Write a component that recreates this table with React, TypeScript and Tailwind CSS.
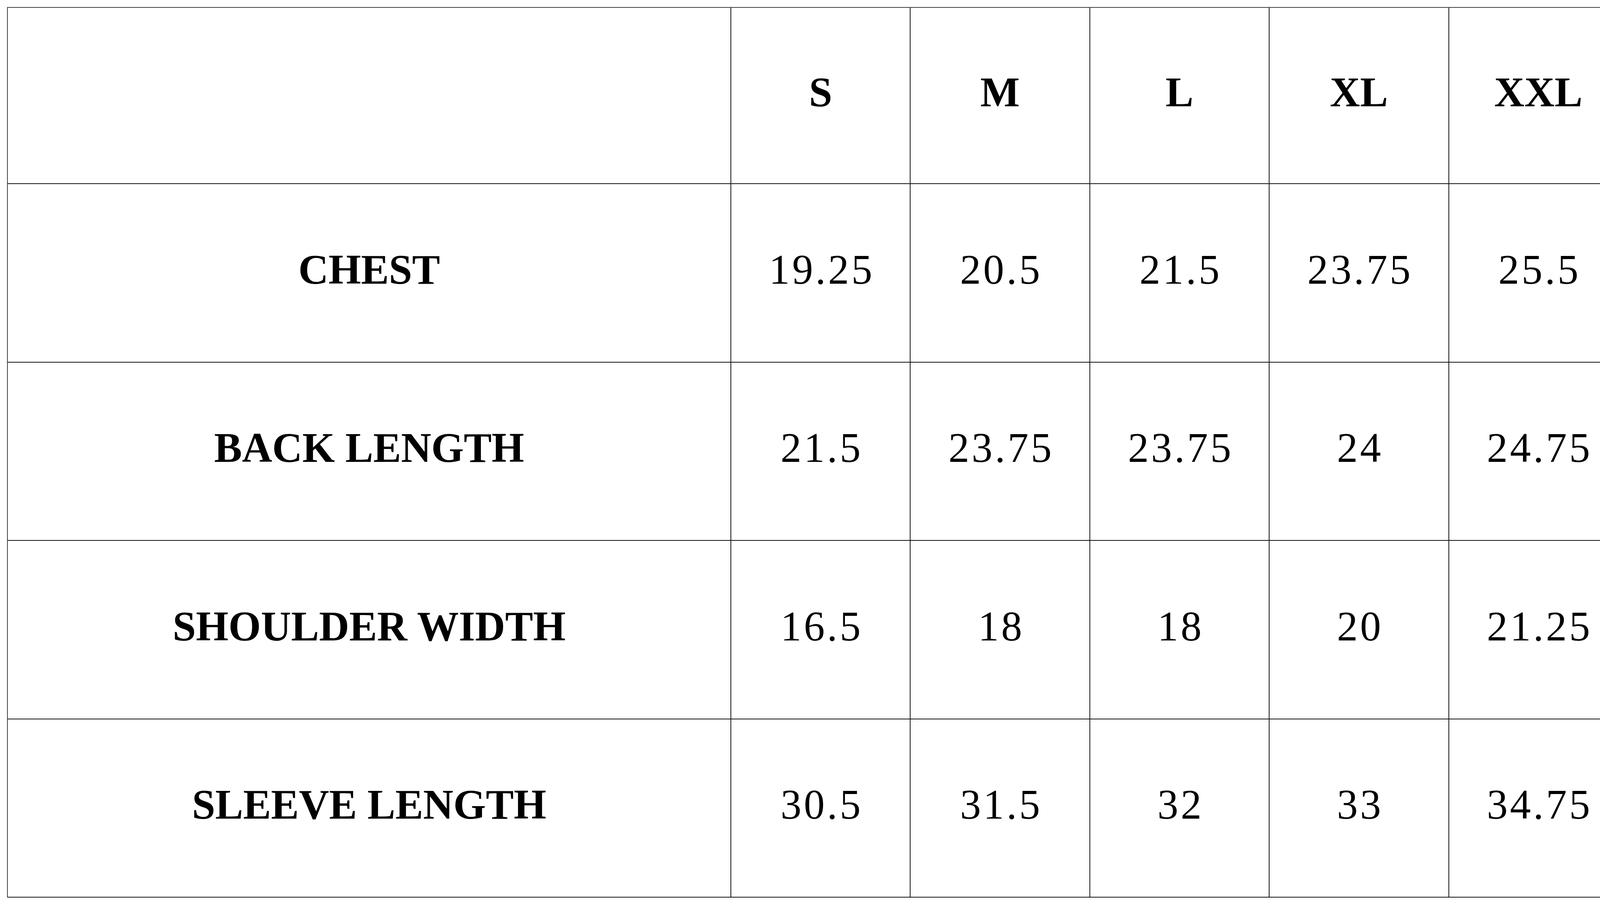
import React from 'react';

const sizes = ['S', 'M', 'L', 'XL', 'XXL'];

const rows = [
  { label: 'CHEST', values: ['19.25', '20.5', '21.5', '23.75', '25.5'] },
  { label: 'BACK LENGTH', values: ['21.5', '23.75', '23.75', '24', '24.75'] },
  { label: 'SHOULDER WIDTH', values: ['16.5', '18', '18', '20', '21.25'] },
  { label: 'SLEEVE LENGTH', values: ['30.5', '31.5', '32', '33', '34.75'] },
];

const cell =
  'flex items-center justify-center border-r-2 border-b-2 border-[#111111] pb-[16px]';

const App = () => {
  return (
    <div className="w-[4189px] h-[2316px] bg-white pt-[18px] pl-[18px] font-['Liberation_Serif','Times_New_Roman',serif] text-black">
      <div className="grid w-[4149px] grid-cols-[1852px_repeat(5,459.4px)] grid-rows-[451px_repeat(4,456.5px)] border-t-2 border-l-2 border-[#404040]">
        {/* header */}
        <div className={cell} />
        {sizes.map((size) => (
          <div key={size} className={`${cell} text-[107px] font-bold leading-none`}>
            {size}
          </div>
        ))}

        {rows.map((row) => (
          <React.Fragment key={row.label}>
            <div className={`${cell} text-[107px] font-bold leading-none whitespace-nowrap`}>
              {row.label}
            </div>
            {row.values.map((value, index) => (
              <div
                key={index}
                className={`${cell} text-[107px] font-normal leading-none tracking-[0.055em] pl-[6px]`}
              >
                {value}
              </div>
            ))}
          </React.Fragment>
        ))}
      </div>
    </div>
  );
};

export default App;
